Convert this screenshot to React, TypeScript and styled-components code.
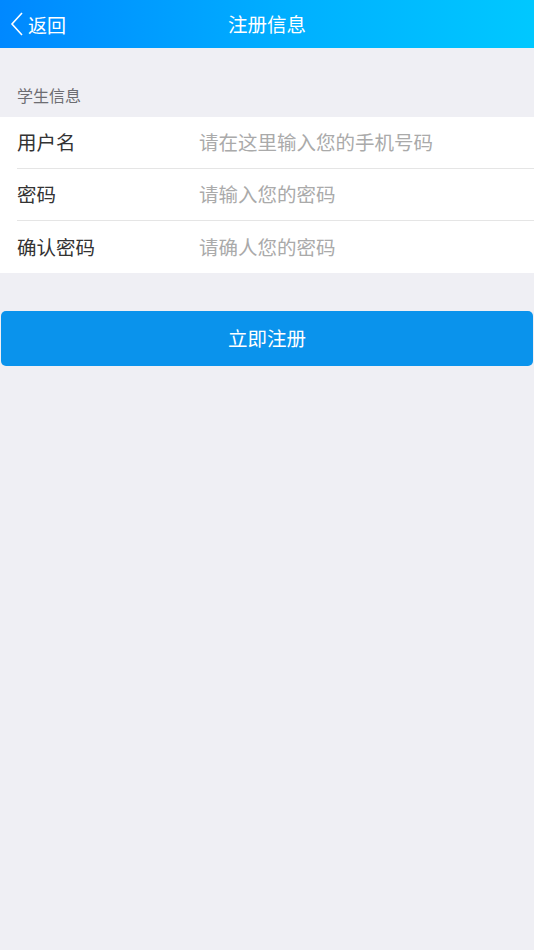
import * as React from "react";
import styled, { createGlobalStyle } from "styled-components";

const GlobalStyle = createGlobalStyle`
  html, body {
    margin: 0;
    padding: 0;
    background: #efeff4;
    font-family: "Noto Sans CJK SC", "Noto Sans", sans-serif;
  }
  * {
    box-sizing: border-box;
  }
`;

const Page = styled.div`
  min-height: 950px;
  background: #efeff4;
`;

const Header = styled.header`
  height: 48px;
  display: flex;
  align-items: center;
  justify-content: center;
  position: relative;
  background: linear-gradient(90deg, #0088ff 0%, #00b0ff 55%, #00c8ff 100%);
  color: #ffffff;
`;

const BackButton = styled.div`
  position: absolute;
  left: 10px;
  top: 0;
  height: 48px;
  display: flex;
  align-items: center;
  gap: 4px;
  font-size: 19px;
  color: #ffffff;
`;

const Title = styled.h1`
  margin: 0;
  font-size: 19.5px;
  font-weight: normal;
  line-height: 1;
`;

const SectionLabel = styled.div`
  padding: 36px 17px 0;
  height: 69px;
  font-size: 16px;
  color: #6d6d72;
  line-height: 22px;
`;

const FormGroup = styled.div`
  background: #ffffff;
  display: flex;
  flex-direction: column;
`;

const Row = styled.label<{ $last?: boolean }>`
  display: flex;
  align-items: center;
  height: 52px;
  margin-left: 17px;
  padding-bottom: 2px;
  border-bottom: ${(p) => (p.$last ? "none" : "1px solid #e5e5e5")};
`;

const FieldName = styled.span`
  width: 182px;
  font-size: 19.5px;
  color: #333333;
`;

const FieldInput = styled.input`
  flex: 1;
  border: none;
  outline: none;
  font-family: inherit;
  font-size: 19.5px;
  color: #333333;
  padding: 0;
  background: transparent;
  &::placeholder {
    color: #aaaaaa;
  }
`;

const SubmitButton = styled.button`
  display: block;
  margin: 38px 1px 0;
  width: calc(100% - 2px);
  height: 55px;
  padding: 0 0 3px;
  border: none;
  border-radius: 5px;
  background: #0a93ec;
  color: #ffffff;
  font-family: inherit;
  font-size: 19.5px;
  cursor: pointer;
`;

const fields = [
  { label: "用户名", placeholder: "请在这里输入您的手机号码", type: "text" },
  { label: "密码", placeholder: "请输入您的密码", type: "password" },
  { label: "确认密码", placeholder: "请确人您的密码", type: "password" },
];

const App = (): React.ReactElement => {
  return (
    <Page>
      <GlobalStyle />
      <Header>
        <BackButton>
          <svg width="14" height="26" viewBox="0 0 14 26">
            <path d="M12 2 L2 13 L12 24" fill="none" stroke="#fff" strokeWidth="1.6" />
          </svg>
          返回
        </BackButton>
        <Title>注册信息</Title>
      </Header>

      <SectionLabel>学生信息</SectionLabel>
      <FormGroup>
        {fields.map((f, i) => (
          <Row key={f.label} $last={i === fields.length - 1}>
            <FieldName>{f.label}</FieldName>
            <FieldInput type={f.type} placeholder={f.placeholder} />
          </Row>
        ))}
      </FormGroup>

      <SubmitButton>立即注册</SubmitButton>
    </Page>
  );
};

export default App;
